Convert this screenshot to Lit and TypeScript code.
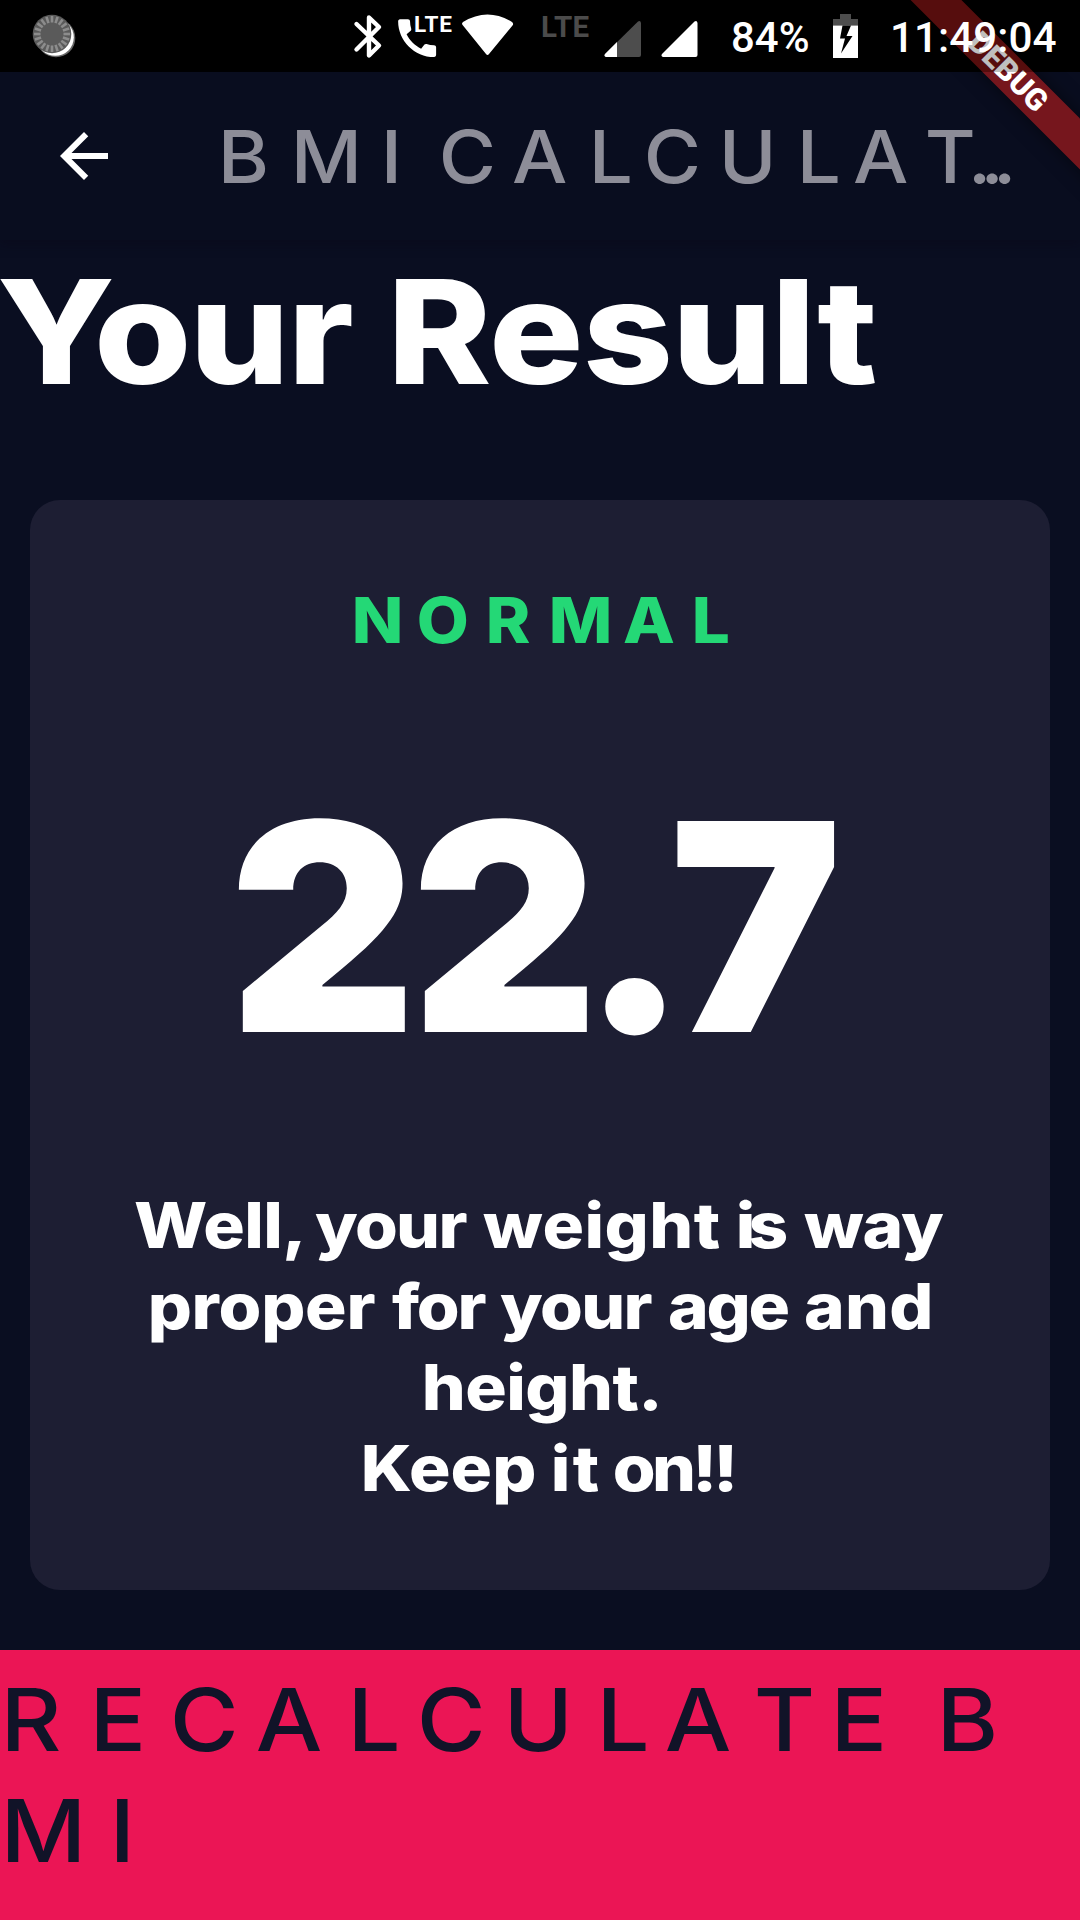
import { LitElement, html, css, svg } from "lit";
import { customElement, property } from "lit/decorators.js";

/** A piece of text with the start and end of its ink along the line. */
type Run = [text: string, start: number, end?: number];

/** One line of text whose runs are tracked out to fixed ink extents. */
@customElement("tracked-line")
export class TrackedLine extends LitElement {
  @property({ attribute: false }) runs: Run[] = [];
  /** Horizontal widening of the letterforms. */
  @property({ type: Number }) stretch = 1;

  static styles = css`
    :host { display: block; white-space: pre; }
    .line { display: inline-block; transform-origin: 0 0; }
  `;

  protected render() {
    const cs = getComputedStyle(this);
    const ctx = document.createElement("canvas").getContext("2d")!;
    ctx.font = `${cs.fontWeight} ${cs.fontSize} ${cs.fontFamily}`;
    const space = ctx.measureText(" ").width;
    let pen = 0;
    const spans = this.runs.map(([text, from, to]) => {
      const start = from / this.stretch;
      const end = to === undefined ? undefined : to / this.stretch;
      const word = text.trimEnd();
      const m = ctx.measureText(word);
      const ink = m.actualBoundingBoxRight + m.actualBoundingBoxLeft;
      const track = end !== undefined && word.length > 1 ? (end - start - ink) / (word.length - 1) : 0;
      const origin = start + m.actualBoundingBoxLeft;
      const margin = origin - pen;
      const gaps = text.length - word.length;
      pen = origin + m.width + gaps * space + text.length * track;
      return html`<span style="margin-left:${margin.toFixed(2)}px;letter-spacing:${track.toFixed(2)}px">${text}</span>`;
    });
    return html`<div class="line" style="transform:scaleX(${this.stretch})">${spans}</div>`;
  }
}

@customElement("status-bar")
export class StatusBar extends LitElement {
  static styles = css`
    :host {
      display: block;
      height: 72px;
      background: rgba(0, 0, 0, 0.25);
      color: #fff;
      font-family: Roboto, sans-serif;
    }
    .icons { display: block; width: 1080px; height: 72px; }
    .figures { font-size: 42px; font-weight: 500; }
    .tag { font-weight: 700; }
  `;

  protected render() {
    const ticks = Array.from({ length: 20 }, (_, i) => i * 18);
    return html`<svg class="icons" viewBox="0 0 1080 72" fill="#fff">
      <circle cx="56" cy="38" r="19.300" fill="#666" />
      <circle cx="55.300" cy="37.300" r="18.500" />
      <circle cx="52" cy="34" r="19.300" fill="#5a5a5a" />
      ${ticks.map((a) => svg`<path d="M52 16v6.500" stroke="#8c8c8c" stroke-width="2.6" transform="rotate(${a} 52 34)" />`)}
      <path d="M356.500 24L379 45.500L369 55.500V17.500L379 27L356.500 49.500" fill="none" stroke="#fff" stroke-width="4.400" stroke-linecap="round" stroke-linejoin="round" />
      <path transform="translate(391.800 12.800) scale(2.110)" d="M20.01 15.38c-1.23 0-2.42-.2-3.53-.56-.35-.12-.74-.03-1.01.24l-1.57 1.97c-2.83-1.35-5.48-3.9-6.89-6.83l1.95-1.66c.27-.28.35-.67.24-1.02-.37-1.11-.56-2.3-.56-3.53 0-.54-.45-.99-.99-.99H4.19C3.65 3 3 3.24 3 3.99 3 13.28 10.73 21 20.01 21c.71 0 .99-.63.99-1.18v-3.45c0-.54-.45-.99-.99-.99z" />
      <text class="tag" x="414" y="32" font-size="22.500" textLength="38">LTE</text>
      <path d="M463 25.500Q461 23.800 463 22Q487.500 7 512 22Q514 23.800 512.500 25.500L489 54Q487.500 56 486 54Z" />
      <text class="tag" x="541" y="37" font-size="29.500" textLength="48" fill="#4b4b4b">LTE</text>
      <path d="M606 57Q603.500 56 605 54L638 21.500Q640.500 20 641 23V55Q641 57 639 57Z" fill="#4d4d4d" />
      <path d="M617 42V57H606Q603.500 56 605 54Z" />
      <path d="M663 57Q660.500 56 662 54L694.500 21.500Q697 20 697.500 23V55Q697.500 57 695.500 57Z" />
      <text class="figures" x="731" y="52" textLength="78.500" lengthAdjust="spacingAndGlyphs">84%</text>
      <path d="M840 14h11v5h7v6.500h-25v-6.500h7z" fill="#4d4d4d" />
      <path d="M833 25.500h25V58h-25z" />
      <path d="M842.500 25.500L840 38.500H845L841 53.500L852.500 36H846.500L851 25.500Z" fill="#000" />
      <text class="figures" x="890" y="52" textLength="166.500" lengthAdjust="spacingAndGlyphs">11:49:04</text>
    </svg>`;
  }
}

@customElement("app-root")
export class AppRoot extends LitElement {
  static styles = css`
    :host {
      display: block;
      position: relative;
      width: 1080px;
      height: 1920px;
      overflow: hidden;
      background: linear-gradient(#000 72px, #0a0e21 72px);
      color: #fff;
      font-family: Inter, "Open Sans", sans-serif;
    }
    .page { display: flex; flex-direction: column; height: 100%; }
    .status { position: relative; z-index: 2; flex: none; }
    .bar {
      flex: none;
      display: flex;
      height: 168px;
      background: #090d1f;
      box-shadow: 0 3px 10px rgba(10, 8, 24, 0.5);
    }
    .back { flex: none; width: 72px; height: 72px; margin: 48px 0 0 48px; }
    .title {
      width: 900px;
      margin-left: -120px;
      font-size: 73px;
      font-weight: 450;
      font-kerning: none;
      line-height: 170px;
      color: #8d8d98;
    }
    .heading {
      flex: none;
      height: 200px;
      margin-bottom: 60px;
      font-size: 144.500px;
      font-weight: 800;
      line-height: 183px;
    }
    .card {
      flex: none;
      height: 1090px;
      margin: 0 30px;
      border-radius: 30px;
      background: #1d1e33;
    }
    .verdict {
      padding-top: 80px;
      font-size: 63px;
      font-weight: 800;
      font-kerning: none;
      line-height: 80px;
      color: #24d876;
    }
    .score {
      margin-top: 91px;
      font-size: 290px;
      font-weight: 900;
      font-kerning: none;
      line-height: 352px;
    }
    .advice {
      margin-top: 82px;
      font-size: 63px;
      font-weight: 800;
      line-height: 81px;
    }
    .again {
      flex: none;
      height: 270px;
      margin-top: 60px;
      background: #eb1555;
      color: #111328;
      font-size: 87px;
      font-weight: 450;
      font-kerning: none;
      line-height: 111px;
    }
    .again-text { padding-top: 14px; }
    .ribbon {
      position: absolute;
      z-index: 1;
      left: 858px;
      top: 54px;
      width: 300px;
      height: 36px;
      transform: rotate(45deg);
      background: rgba(183, 28, 28, 0.627);
      box-shadow: 0 0 18px rgba(0, 0, 0, 0.5);
      font: 900 30.600px/36px Roboto, sans-serif;
      text-align: center;
    }
  `;

  protected render() {
    const title: Run[] = [
      ["B", 223], ["M", 296], ["I ", 386], ["C", 443], ["A", 513], ["L", 594], ["C", 648],
      ["U", 724], ["L", 802], ["A", 854], ["T", 928], ["...", 973, 1011],
    ];
    const advice: Run[][] = [
      [["Well, ", 105, 271], ["your ", 288, 440], ["weight ", 456, 692], ["is ", 712, 760], ["way", 777, 917]],
      [["proper ", 121, 345], ["for ", 362, 456], ["your ", 470, 622], ["age ", 639, 758], ["and", 775, 900]],
      [["height.", 395, 627]],
      [["Keep ", 334, 504], ["it ", 524, 568], ["on!!", 585, 703]],
    ];
    const again: Run[][] = [
      [
        ["R", 8], ["E", 97], ["C", 174], ["A", 258], ["L", 355], ["C", 421], ["U", 511],
        ["L", 604], ["A", 667], ["T", 757], ["E ", 838], ["B", 944],
      ],
      [["M", 8], ["I", 117]],
    ];
    return html`
      <div class="page">
        <status-bar class="status"></status-bar>
        <header class="bar">
          <svg class="back" viewBox="0 0 24 24" fill="#fff">
            <path d="M20 11H7.830l5.590-5.590L12 4l-8 8 8 8 1.410-1.410L7.830 13H20z" />
          </svg>
          <tracked-line class="title" stretch="1.07" .runs=${title}></tracked-line>
        </header>
        <tracked-line
          class="heading"
          stretch="1.09"
          .runs=${[["Your ", 0, 352], ["Result", 396, 875]]}
        ></tracked-line>
        <section class="card">
          <tracked-line
            class="verdict"
            stretch="1.07"
            .runs=${[["N", 325], ["O", 389], ["R", 459], ["M", 522], ["A", 594], ["L", 665]]}
          ></tracked-line>
          <tracked-line class="score" .runs=${[["2", 208], ["2", 390], [".", 573], ["7", 644]]}></tracked-line>
          <div class="advice">
            ${advice.map((line) => html`<tracked-line stretch="1.1" .runs=${line}></tracked-line>`)}
          </div>
        </section>
        <footer class="again">
          <div class="again-text">
            ${again.map((line) => html`<tracked-line stretch="1.08" .runs=${line}></tracked-line>`)}
          </div>
        </footer>
      </div>
      <div class="ribbon">DEBUG</div>
    `;
  }
}
